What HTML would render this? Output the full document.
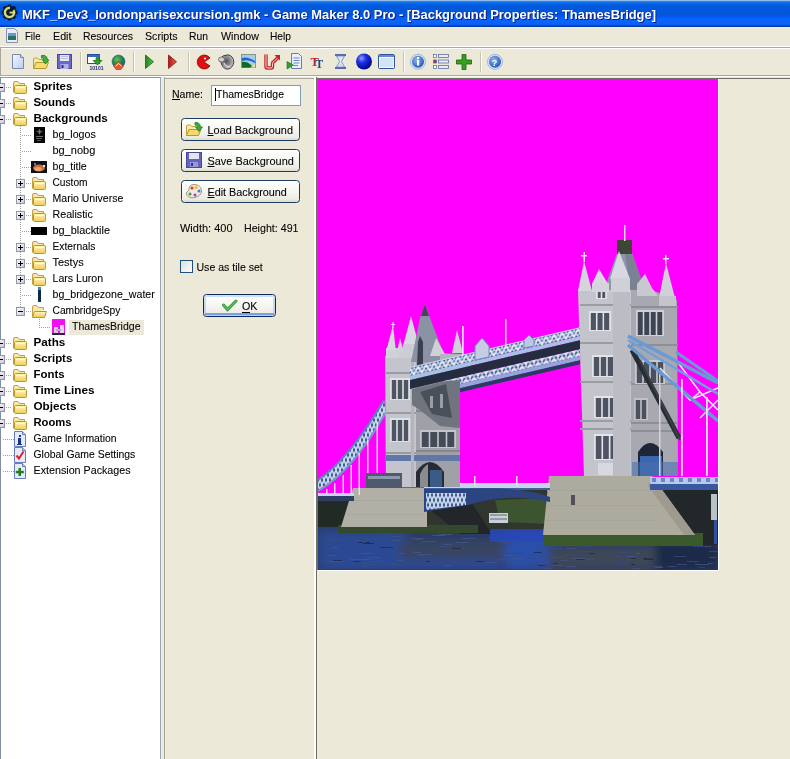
<!DOCTYPE html>
<html><head><meta charset="utf-8"><style>
html,body{margin:0;padding:0;background:#ECE9D8;overflow:hidden}
svg{display:block;will-change:transform}
text{font-family:"Liberation Sans", sans-serif}
</style></head><body>
<svg width="790" height="759" viewBox="0 0 790 759">
<rect x="0" y="0" width="790" height="759" fill="#ECE9D8" />
<defs>
<linearGradient id="tg" x1="0" y1="0" x2="0" y2="27" gradientUnits="userSpaceOnUse">
<stop offset="0" stop-color="#D8F4FF"/>
<stop offset="0.04" stop-color="#3C7CD8"/>
<stop offset="0.08" stop-color="#1A78EA"/>
<stop offset="0.14" stop-color="#0062E8"/>
<stop offset="0.25" stop-color="#0058DC"/>
<stop offset="0.5" stop-color="#0056D6"/>
<stop offset="0.6" stop-color="#0058F0"/>
<stop offset="0.72" stop-color="#0A64FF"/>
<stop offset="0.9" stop-color="#0A62FA"/>
<stop offset="0.94" stop-color="#0050D0"/>
<stop offset="1" stop-color="#00309A"/>
</linearGradient>
</defs>
<rect x="0" y="0" width="790" height="27" fill="url(#tg)" />
<rect x="0" y="27" width="790" height="1" fill="#E4F0FC" />
<g transform="translate(9.5,12.5)"><circle r="6.8" fill="#0E1A30"/><rect x="-1.8" y="-8" width="3.6" height="3.4" fill="#0E1A30" transform="rotate(0)"/><rect x="-1.8" y="-8" width="3.6" height="3.4" fill="#0E1A30" transform="rotate(45)"/><rect x="-1.8" y="-8" width="3.6" height="3.4" fill="#0E1A30" transform="rotate(90)"/><rect x="-1.8" y="-8" width="3.6" height="3.4" fill="#0E1A30" transform="rotate(135)"/><rect x="-1.8" y="-8" width="3.6" height="3.4" fill="#0E1A30" transform="rotate(180)"/><rect x="-1.8" y="-8" width="3.6" height="3.4" fill="#0E1A30" transform="rotate(225)"/><rect x="-1.8" y="-8" width="3.6" height="3.4" fill="#0E1A30" transform="rotate(270)"/><rect x="-1.8" y="-8" width="3.6" height="3.4" fill="#0E1A30" transform="rotate(315)"/><circle r="4.6" fill="none" stroke="#D4DC78" stroke-width="2.4" stroke-dasharray="24 5" transform="rotate(-30)"/><rect x="0" y="-0.8" width="4.5" height="1.8" fill="#D4DC78"/></g>
<text x="23" y="20" font-size="13" font-weight="700" fill="#0A1E7A" textLength="634" lengthAdjust="spacingAndGlyphs" >MKF_Dev3_londonparisexcursion.gmk - Game Maker 8.0 Pro - [Background Properties: ThamesBridge]</text>
<text x="22" y="19" font-size="13" font-weight="700" fill="#FFFFFF" textLength="634" lengthAdjust="spacingAndGlyphs" >MKF_Dev3_londonparisexcursion.gmk - Game Maker 8.0 Pro - [Background Properties: ThamesBridge]</text>
<g transform="translate(5,28)"><path d="M1.5 0.5 H9.5 L12.5 3.5 V14.5 H1.5 Z" fill="#E8ECF8" stroke="#8890B0"/><rect x="3" y="5" width="8" height="7" fill="#2E7060"/><rect x="3" y="5" width="8" height="3" fill="#5AA0C8"/></g>
<text x="25" y="40" font-size="11" font-weight="400" fill="#000" stroke="#000" stroke-width="0.08" textLength="15.5" lengthAdjust="spacingAndGlyphs" >File</text>
<text x="53" y="40" font-size="11" font-weight="400" fill="#000" stroke="#000" stroke-width="0.08" textLength="18.5" lengthAdjust="spacingAndGlyphs" >Edit</text>
<text x="83" y="40" font-size="11" font-weight="400" fill="#000" stroke="#000" stroke-width="0.08" textLength="50" lengthAdjust="spacingAndGlyphs" >Resources</text>
<text x="145" y="40" font-size="11" font-weight="400" fill="#000" stroke="#000" stroke-width="0.08" textLength="32.5" lengthAdjust="spacingAndGlyphs" >Scripts</text>
<text x="189" y="40" font-size="11" font-weight="400" fill="#000" stroke="#000" stroke-width="0.08" textLength="19" lengthAdjust="spacingAndGlyphs" >Run</text>
<text x="221" y="40" font-size="11" font-weight="400" fill="#000" stroke="#000" stroke-width="0.08" textLength="38" lengthAdjust="spacingAndGlyphs" >Window</text>
<text x="270" y="40" font-size="11" font-weight="400" fill="#000" stroke="#000" stroke-width="0.08" textLength="21" lengthAdjust="spacingAndGlyphs" >Help</text>
<rect x="0" y="46" width="790" height="1" fill="#FFFFFF" />
<rect x="0" y="47" width="790" height="1" fill="#ACA899" />
<rect x="0" y="48" width="790" height="1" fill="#FFFFFF" />
<rect x="0" y="75" width="790" height="1" fill="#ACA899" />
<rect x="0" y="76" width="790" height="1" fill="#FFFFFF" />
<rect x="0" y="48" width="1" height="28" fill="#ACA899" />
<rect x="80" y="52" width="1" height="20" fill="#C5C2B2" />
<rect x="81" y="52" width="1" height="20" fill="#FFFFFF" />
<rect x="133" y="52" width="1" height="20" fill="#C5C2B2" />
<rect x="134" y="52" width="1" height="20" fill="#FFFFFF" />
<rect x="188" y="52" width="1" height="20" fill="#C5C2B2" />
<rect x="189" y="52" width="1" height="20" fill="#FFFFFF" />
<rect x="403" y="52" width="1" height="20" fill="#C5C2B2" />
<rect x="404" y="52" width="1" height="20" fill="#FFFFFF" />
<rect x="480" y="52" width="1" height="20" fill="#C5C2B2" />
<rect x="481" y="52" width="1" height="20" fill="#FFFFFF" />
<defs><linearGradient id="docg" x1="0" y1="0" x2="1" y2="1"><stop offset="0" stop-color="#F4F8FF"/><stop offset="1" stop-color="#B8CCF4"/></linearGradient><radialGradient id="ball" cx="0.35" cy="0.3" r="0.7"><stop offset="0" stop-color="#8AA0FF"/><stop offset="0.4" stop-color="#2030E0"/><stop offset="1" stop-color="#000890"/></radialGradient><radialGradient id="globe" cx="0.4" cy="0.35" r="0.7"><stop offset="0" stop-color="#60C060"/><stop offset="0.6" stop-color="#208040"/><stop offset="1" stop-color="#1850A0"/></radialGradient><radialGradient id="infog" cx="0.4" cy="0.35" r="0.7"><stop offset="0" stop-color="#90B8F0"/><stop offset="1" stop-color="#1E50B0"/></radialGradient><linearGradient id="playg" x1="0" y1="0" x2="1" y2="0"><stop offset="0" stop-color="#1E8A1E"/><stop offset="1" stop-color="#50C050"/></linearGradient><linearGradient id="redg" x1="0" y1="0" x2="1" y2="0"><stop offset="0" stop-color="#B01818"/><stop offset="1" stop-color="#E86060"/></linearGradient></defs>
<path d="M12.5 54.5 H20.5 L23.5 57.5 V68.5 H12.5 Z" fill="url(#docg)" stroke="#7A88A8"/><path d="M20.5 54.5 V57.5 H23.5" fill="#D0DCF0" stroke="#7A88A8"/>
<g transform="translate(33,53)"><path d="M0.5 15 V6 Q0.5 5 1.5 5 H4.5 L6 6.5 H10" fill="#F8E8A0" stroke="#C0A040"/><path d="M0.5 15.5 L3 9.5 H15.5 L13 15.5 Z" fill="#F4DC70" stroke="#B8962E"/><path d="M8.5 2.5 Q14 1.5 14.5 7 L16 7 L12.5 11 L9.5 7 L11 7 Q11 4.5 8.5 5 Z" fill="#40B040" stroke="#207820" stroke-width="0.8"/></g>
<g transform="translate(57,54)"><rect x="0.5" y="0.5" width="14" height="14" fill="#6A68C8" stroke="#4A48A8"/><rect x="3" y="1" width="9" height="6" fill="#E8E8F4"/><rect x="4" y="2" width="7" height="1" fill="#C0C0D8"/><rect x="4" y="4" width="7" height="1" fill="#C0C0D8"/><rect x="3.5" y="10" width="8" height="5" fill="#B0B0E0"/><rect x="4.5" y="11" width="2" height="3" fill="#2828A0"/></g>
<g transform="translate(87,54)"><rect x="0.5" y="0.5" width="12" height="9" fill="#FFFFFF" stroke="#2850A0"/><rect x="1" y="1" width="12" height="2" fill="#3868C0"/><path d="M9 3.5 H12 V6.5 H15 L10.5 11 L6 6.5 H9 Z" fill="#30A030" stroke="#187018" stroke-width="0.7"/><text x="2.5" y="15.5" font-size="5" font-weight="700" fill="#202880" textLength="14" lengthAdjust="spacingAndGlyphs">10101</text></g>
<circle cx="118.5" cy="61.5" r="6.5" fill="url(#globe)" stroke="#205080" stroke-width="0.5"/><path d="M113.5 66 L118.5 61.5 L123.5 66 L121 69.5 H116 Z" fill="#E05830" stroke="#A03818" stroke-width="0.6"/><path d="M115.5 66 L118.5 63.5 L121.5 66" fill="none" stroke="#F8F0F0" stroke-width="1"/>
<path d="M145.5 55 L153.5 61.8 L145.5 68.5 Z" fill="url(#playg)" stroke="#186018" stroke-width="0.8"/>
<path d="M168.5 55 L176.5 61.8 L168.5 68.5 Z" fill="url(#redg)" stroke="#901010" stroke-width="0.8"/>
<path d="M210 58 A7 7 0 1 0 210 66 L204 62 Z" fill="#E01010" stroke="#900000" stroke-width="0.8" transform="translate(0,0)"/><circle cx="205" cy="58.5" r="1" fill="#FFF"/>
<defs><radialGradient id="spk" cx="0.45" cy="0.45" r="0.6"><stop offset="0" stop-color="#505058"/><stop offset="0.5" stop-color="#8A8A90"/><stop offset="1" stop-color="#D8D8DC"/></radialGradient></defs>
<g transform="translate(218,54)"><path d="M2 5 Q4 1 10 0.8 Q15.5 2 15.8 8 Q15 14 10 15.2 Q5 15 3.5 10 Z" fill="url(#spk)" stroke="#303030" stroke-width="0.9"/><ellipse cx="3.5" cy="5.5" rx="3" ry="2.5" fill="#D0D0D4" stroke="#505050" stroke-width="0.7"/><path d="M6 9 Q8 13 12 12.5" stroke="#D8D8DC" stroke-width="1.2" fill="none"/></g>
<g transform="translate(241,54)"><rect x="0.5" y="0.5" width="14" height="13" fill="#9CD0F0" stroke="#8A9488"/><path d="M1 4 Q6 2 14 7 V9 Q8 5 1 7 Z" fill="#2A64C0"/><path d="M1 13.5 V8 Q6 7 10 11 L12 13.5 Z" fill="#106A20"/><path d="M9 13.5 L14 10 V13.5 Z" fill="#E0E890"/></g>
<g transform="translate(264,54)"><path d="M2 0.5 V12.5 Q2 14 3.5 14 H7 Q8.5 14 8.5 12.5 V9.5 Q8.5 8 10 7.5 L14.5 3" fill="none" stroke="#C82020" stroke-width="3.4"/><path d="M2 0.5 V12.5 Q2 14 3.5 14 H7 Q8.5 14 8.5 12.5 V9.5 Q8.5 8 10 7.5 L14.5 3" fill="none" stroke="#F8D8D8" stroke-width="1"/><path d="M10.5 1 H16 V6.5 Z" fill="#C82020"/></g>
<g transform="translate(287,53)"><path d="M4.5 0.5 H11.5 L14.5 3.5 V15.5 H4.5 Z" fill="#E8F0FC" stroke="#6A7CB0"/><path d="M6.5 5 H12.5 M6.5 7.5 H12.5 M6.5 10 H12.5 M6.5 12.5 H11" stroke="#7088C0" stroke-width="1"/><path d="M0 8.5 L6.5 12 L0 16 Z" fill="#30A030" stroke="#187018" stroke-width="0.6"/></g>
<text x="310.5" y="66" style="font-family:'Liberation Serif'" font-size="12.5" font-weight="700" fill="#C02030">T</text><text x="315.5" y="67.5" style="font-family:'Liberation Serif'" font-size="11.5" font-weight="700" fill="#1E4888">T</text>
<g transform="translate(335,54)"><rect x="0" y="0" width="11" height="2" fill="#5868A8"/><rect x="0" y="13" width="11" height="2" fill="#5868A8"/><path d="M1.5 2 L9.5 2 L6.5 7.5 L9.5 13 L1.5 13 L4.5 7.5 Z" fill="#E0E8F8" stroke="#7080B8" stroke-width="0.8"/><path d="M3.5 12.5 L5.5 9.5 L7.5 12.5 Z" fill="#C8D0F0"/></g>
<circle cx="364" cy="61.5" r="8" fill="url(#ball)"/>
<g transform="translate(378,54)"><rect x="0.5" y="0.5" width="16" height="14" rx="1" fill="#F0F8FF" stroke="#3050A0"/><rect x="1" y="1" width="15" height="2" fill="#6888D0"/><rect x="2" y="4" width="13" height="9" fill="#D4E4F8"/></g>
<circle cx="418" cy="61.8" r="7.5" fill="#D8E4F8" stroke="#90A8D0" stroke-width="0.8"/><circle cx="418" cy="61.8" r="6" fill="url(#infog)"/><rect x="417" y="57" width="2.2" height="2" fill="#FFF"/><rect x="417" y="60" width="2.2" height="5.5" fill="#FFF"/>
<g transform="translate(433,54)"><rect x="0.5" y="0.5" width="3" height="3" fill="#FFF" stroke="#6070A0" stroke-width="0.8"/><rect x="0.5" y="6" width="3" height="3" fill="#D02020" stroke="#6070A0" stroke-width="0.8"/><rect x="0.5" y="11.5" width="3" height="3" fill="#FFF" stroke="#6070A0" stroke-width="0.8"/><rect x="5.5" y="0.5" width="10" height="3" fill="#E8ECF8" stroke="#6070A0" stroke-width="0.8"/><rect x="5.5" y="6" width="10" height="3" fill="#E8ECF8" stroke="#6070A0" stroke-width="0.8"/><rect x="5.5" y="11.5" width="10" height="3" fill="#E8ECF8" stroke="#6070A0" stroke-width="0.8"/></g>
<path d="M462 54.5 H466 V60 H471.5 V64 H466 V69.5 H462 V64 H456.5 V60 H462 Z" fill="#38A020" stroke="#1E6010" stroke-width="0.8"/>
<circle cx="495" cy="61.8" r="7.5" fill="#D8E4F8" stroke="#90A8D0" stroke-width="0.8"/><circle cx="495" cy="61.8" r="6" fill="url(#infog)"/><text x="491.8" y="66" font-size="9" font-weight="700" fill="#FFF">?</text>
<rect x="0" y="77" width="161" height="682" fill="#FFFFFF" />
<rect x="0" y="77" width="161" height="1" fill="#8C98A4" />
<rect x="0" y="77" width="1" height="682" fill="#8090A4" />
<rect x="160" y="77" width="1" height="682" fill="#99A4AC" />
<rect x="161" y="77" width="3" height="682" fill="#E8ECE6" />
<rect x="164" y="77" width="1" height="682" fill="#A0A08C" />
<rect x="165" y="77" width="1" height="682" fill="#F4F0E0" />
<defs><linearGradient id="fg" x1="0" y1="0" x2="0" y2="1"><stop offset="0" stop-color="#FFF6C0"/><stop offset="1" stop-color="#F0CC50"/></linearGradient><linearGradient id="bx" x1="0" y1="0" x2="1" y2="1"><stop offset="0" stop-color="#FFFFFF"/><stop offset="1" stop-color="#C8C8D0"/></linearGradient></defs>
<rect x="20" y="126" width="1" height="1" fill="#A0A0A0" />
<rect x="20" y="128" width="1" height="1" fill="#A0A0A0" />
<rect x="20" y="130" width="1" height="1" fill="#A0A0A0" />
<rect x="20" y="132" width="1" height="1" fill="#A0A0A0" />
<rect x="20" y="134" width="1" height="1" fill="#A0A0A0" />
<rect x="20" y="136" width="1" height="1" fill="#A0A0A0" />
<rect x="20" y="138" width="1" height="1" fill="#A0A0A0" />
<rect x="20" y="140" width="1" height="1" fill="#A0A0A0" />
<rect x="20" y="142" width="1" height="1" fill="#A0A0A0" />
<rect x="20" y="144" width="1" height="1" fill="#A0A0A0" />
<rect x="20" y="146" width="1" height="1" fill="#A0A0A0" />
<rect x="20" y="148" width="1" height="1" fill="#A0A0A0" />
<rect x="20" y="150" width="1" height="1" fill="#A0A0A0" />
<rect x="20" y="152" width="1" height="1" fill="#A0A0A0" />
<rect x="20" y="154" width="1" height="1" fill="#A0A0A0" />
<rect x="20" y="156" width="1" height="1" fill="#A0A0A0" />
<rect x="20" y="158" width="1" height="1" fill="#A0A0A0" />
<rect x="20" y="160" width="1" height="1" fill="#A0A0A0" />
<rect x="20" y="162" width="1" height="1" fill="#A0A0A0" />
<rect x="20" y="164" width="1" height="1" fill="#A0A0A0" />
<rect x="20" y="166" width="1" height="1" fill="#A0A0A0" />
<rect x="20" y="168" width="1" height="1" fill="#A0A0A0" />
<rect x="20" y="170" width="1" height="1" fill="#A0A0A0" />
<rect x="20" y="172" width="1" height="1" fill="#A0A0A0" />
<rect x="20" y="174" width="1" height="1" fill="#A0A0A0" />
<rect x="20" y="176" width="1" height="1" fill="#A0A0A0" />
<rect x="20" y="178" width="1" height="1" fill="#A0A0A0" />
<rect x="20" y="180" width="1" height="1" fill="#A0A0A0" />
<rect x="20" y="182" width="1" height="1" fill="#A0A0A0" />
<rect x="20" y="184" width="1" height="1" fill="#A0A0A0" />
<rect x="20" y="186" width="1" height="1" fill="#A0A0A0" />
<rect x="20" y="188" width="1" height="1" fill="#A0A0A0" />
<rect x="20" y="190" width="1" height="1" fill="#A0A0A0" />
<rect x="20" y="192" width="1" height="1" fill="#A0A0A0" />
<rect x="20" y="194" width="1" height="1" fill="#A0A0A0" />
<rect x="20" y="196" width="1" height="1" fill="#A0A0A0" />
<rect x="20" y="198" width="1" height="1" fill="#A0A0A0" />
<rect x="20" y="200" width="1" height="1" fill="#A0A0A0" />
<rect x="20" y="202" width="1" height="1" fill="#A0A0A0" />
<rect x="20" y="204" width="1" height="1" fill="#A0A0A0" />
<rect x="20" y="206" width="1" height="1" fill="#A0A0A0" />
<rect x="20" y="208" width="1" height="1" fill="#A0A0A0" />
<rect x="20" y="210" width="1" height="1" fill="#A0A0A0" />
<rect x="20" y="212" width="1" height="1" fill="#A0A0A0" />
<rect x="20" y="214" width="1" height="1" fill="#A0A0A0" />
<rect x="20" y="216" width="1" height="1" fill="#A0A0A0" />
<rect x="20" y="218" width="1" height="1" fill="#A0A0A0" />
<rect x="20" y="220" width="1" height="1" fill="#A0A0A0" />
<rect x="20" y="222" width="1" height="1" fill="#A0A0A0" />
<rect x="20" y="224" width="1" height="1" fill="#A0A0A0" />
<rect x="20" y="226" width="1" height="1" fill="#A0A0A0" />
<rect x="20" y="228" width="1" height="1" fill="#A0A0A0" />
<rect x="20" y="230" width="1" height="1" fill="#A0A0A0" />
<rect x="20" y="232" width="1" height="1" fill="#A0A0A0" />
<rect x="20" y="234" width="1" height="1" fill="#A0A0A0" />
<rect x="20" y="236" width="1" height="1" fill="#A0A0A0" />
<rect x="20" y="238" width="1" height="1" fill="#A0A0A0" />
<rect x="20" y="240" width="1" height="1" fill="#A0A0A0" />
<rect x="20" y="242" width="1" height="1" fill="#A0A0A0" />
<rect x="20" y="244" width="1" height="1" fill="#A0A0A0" />
<rect x="20" y="246" width="1" height="1" fill="#A0A0A0" />
<rect x="20" y="248" width="1" height="1" fill="#A0A0A0" />
<rect x="20" y="250" width="1" height="1" fill="#A0A0A0" />
<rect x="20" y="252" width="1" height="1" fill="#A0A0A0" />
<rect x="20" y="254" width="1" height="1" fill="#A0A0A0" />
<rect x="20" y="256" width="1" height="1" fill="#A0A0A0" />
<rect x="20" y="258" width="1" height="1" fill="#A0A0A0" />
<rect x="20" y="260" width="1" height="1" fill="#A0A0A0" />
<rect x="20" y="262" width="1" height="1" fill="#A0A0A0" />
<rect x="20" y="264" width="1" height="1" fill="#A0A0A0" />
<rect x="20" y="266" width="1" height="1" fill="#A0A0A0" />
<rect x="20" y="268" width="1" height="1" fill="#A0A0A0" />
<rect x="20" y="270" width="1" height="1" fill="#A0A0A0" />
<rect x="20" y="272" width="1" height="1" fill="#A0A0A0" />
<rect x="20" y="274" width="1" height="1" fill="#A0A0A0" />
<rect x="20" y="276" width="1" height="1" fill="#A0A0A0" />
<rect x="20" y="278" width="1" height="1" fill="#A0A0A0" />
<rect x="20" y="280" width="1" height="1" fill="#A0A0A0" />
<rect x="20" y="282" width="1" height="1" fill="#A0A0A0" />
<rect x="20" y="284" width="1" height="1" fill="#A0A0A0" />
<rect x="20" y="286" width="1" height="1" fill="#A0A0A0" />
<rect x="20" y="288" width="1" height="1" fill="#A0A0A0" />
<rect x="20" y="290" width="1" height="1" fill="#A0A0A0" />
<rect x="20" y="292" width="1" height="1" fill="#A0A0A0" />
<rect x="20" y="294" width="1" height="1" fill="#A0A0A0" />
<rect x="20" y="296" width="1" height="1" fill="#A0A0A0" />
<rect x="20" y="298" width="1" height="1" fill="#A0A0A0" />
<rect x="20" y="300" width="1" height="1" fill="#A0A0A0" />
<rect x="20" y="302" width="1" height="1" fill="#A0A0A0" />
<rect x="20" y="304" width="1" height="1" fill="#A0A0A0" />
<rect x="20" y="306" width="1" height="1" fill="#A0A0A0" />
<rect x="20" y="308" width="1" height="1" fill="#A0A0A0" />
<rect x="20" y="310" width="1" height="1" fill="#A0A0A0" />
<rect x="39" y="319" width="1" height="1" fill="#A0A0A0" />
<rect x="39" y="321" width="1" height="1" fill="#A0A0A0" />
<rect x="39" y="323" width="1" height="1" fill="#A0A0A0" />
<rect x="39" y="325" width="1" height="1" fill="#A0A0A0" />
<rect x="39" y="327" width="1" height="1" fill="#A0A0A0" />
<rect x="-3.5" y="83.5" width="8" height="8" fill="url(#bx)" stroke="#8C98A8"/>
<rect x="-2" y="87" width="5" height="1" fill="#000" />
<rect x="6" y="87" width="1" height="1" fill="#A0A0A0" />
<rect x="8" y="87" width="1" height="1" fill="#A0A0A0" />
<rect x="10" y="87" width="1" height="1" fill="#A0A0A0" />
<g transform="translate(12,80)"><path d="M1.5 12.5 V3 Q1.5 1.5 3 1.5 H6 L7.5 3.5 H12.5 V6" fill="#F8E8A8" stroke="#C0A048"/><rect x="2.5" y="5.5" width="12" height="8" rx="1" fill="url(#fg)" stroke="#B8962E"/><rect x="4" y="7" width="8" height="1" fill="#FFFBE0"/></g>
<text x="33.5" y="90" font-size="11" font-weight="700" fill="#000" textLength="38.8" lengthAdjust="spacingAndGlyphs" >Sprites</text>
<rect x="-3.5" y="99.5" width="8" height="8" fill="url(#bx)" stroke="#8C98A8"/>
<rect x="-2" y="103" width="5" height="1" fill="#000" />
<rect x="6" y="103" width="1" height="1" fill="#A0A0A0" />
<rect x="8" y="103" width="1" height="1" fill="#A0A0A0" />
<rect x="10" y="103" width="1" height="1" fill="#A0A0A0" />
<g transform="translate(12,96)"><path d="M1.5 12.5 V3 Q1.5 1.5 3 1.5 H6 L7.5 3.5 H12.5 V6" fill="#F8E8A8" stroke="#C0A048"/><rect x="2.5" y="5.5" width="12" height="8" rx="1" fill="url(#fg)" stroke="#B8962E"/><rect x="4" y="7" width="8" height="1" fill="#FFFBE0"/></g>
<text x="33.5" y="106" font-size="11" font-weight="700" fill="#000" textLength="41.8" lengthAdjust="spacingAndGlyphs" >Sounds</text>
<rect x="-3.5" y="115.5" width="8" height="8" fill="url(#bx)" stroke="#8C98A8"/>
<rect x="-2" y="119" width="5" height="1" fill="#000" />
<rect x="6" y="119" width="1" height="1" fill="#A0A0A0" />
<rect x="8" y="119" width="1" height="1" fill="#A0A0A0" />
<rect x="10" y="119" width="1" height="1" fill="#A0A0A0" />
<g transform="translate(12,112)"><path d="M1.5 12.5 V3 Q1.5 1.5 3 1.5 H6 L7.5 3.5 H12.5 V6" fill="#F8E8A8" stroke="#C0A048"/><rect x="2.5" y="5.5" width="12" height="8" rx="1" fill="url(#fg)" stroke="#B8962E"/><rect x="4" y="7" width="8" height="1" fill="#FFFBE0"/></g>
<text x="33.5" y="122" font-size="11" font-weight="700" fill="#000" textLength="74.3" lengthAdjust="spacingAndGlyphs" >Backgrounds</text>
<rect x="22" y="135" width="1" height="1" fill="#A0A0A0" />
<rect x="24" y="135" width="1" height="1" fill="#A0A0A0" />
<rect x="26" y="135" width="1" height="1" fill="#A0A0A0" />
<rect x="28" y="135" width="1" height="1" fill="#A0A0A0" />
<rect x="30" y="135" width="1" height="1" fill="#A0A0A0" />
<text x="52.5" y="138" font-size="11" font-weight="400" fill="#000" stroke="#000" stroke-width="0.08" textLength="43.3" lengthAdjust="spacingAndGlyphs" >bg_logos</text>
<rect x="22" y="151" width="1" height="1" fill="#A0A0A0" />
<rect x="24" y="151" width="1" height="1" fill="#A0A0A0" />
<rect x="26" y="151" width="1" height="1" fill="#A0A0A0" />
<rect x="28" y="151" width="1" height="1" fill="#A0A0A0" />
<rect x="30" y="151" width="1" height="1" fill="#A0A0A0" />
<text x="52.5" y="154" font-size="11" font-weight="400" fill="#000" stroke="#000" stroke-width="0.08" textLength="42.8" lengthAdjust="spacingAndGlyphs" >bg_nobg</text>
<rect x="22" y="167" width="1" height="1" fill="#A0A0A0" />
<rect x="24" y="167" width="1" height="1" fill="#A0A0A0" />
<rect x="26" y="167" width="1" height="1" fill="#A0A0A0" />
<rect x="28" y="167" width="1" height="1" fill="#A0A0A0" />
<rect x="30" y="167" width="1" height="1" fill="#A0A0A0" />
<text x="52.5" y="170" font-size="11" font-weight="400" fill="#000" stroke="#000" stroke-width="0.08" textLength="34.3" lengthAdjust="spacingAndGlyphs" >bg_title</text>
<rect x="16.5" y="179.5" width="8" height="8" fill="url(#bx)" stroke="#8C98A8"/>
<rect x="18" y="183" width="5" height="1" fill="#000" />
<rect x="20" y="181" width="1" height="5" fill="#000" />
<rect x="26" y="183" width="1" height="1" fill="#A0A0A0" />
<rect x="28" y="183" width="1" height="1" fill="#A0A0A0" />
<rect x="30" y="183" width="1" height="1" fill="#A0A0A0" />
<g transform="translate(31,176)"><path d="M1.5 12.5 V3 Q1.5 1.5 3 1.5 H6 L7.5 3.5 H12.5 V6" fill="#F8E8A8" stroke="#C0A048"/><rect x="2.5" y="5.5" width="12" height="8" rx="1" fill="url(#fg)" stroke="#B8962E"/><rect x="4" y="7" width="8" height="1" fill="#FFFBE0"/></g>
<text x="52.5" y="186" font-size="11" font-weight="400" fill="#000" stroke="#000" stroke-width="0.08" textLength="35.099999999999994" lengthAdjust="spacingAndGlyphs" >Custom</text>
<rect x="16.5" y="195.5" width="8" height="8" fill="url(#bx)" stroke="#8C98A8"/>
<rect x="18" y="199" width="5" height="1" fill="#000" />
<rect x="20" y="197" width="1" height="5" fill="#000" />
<rect x="26" y="199" width="1" height="1" fill="#A0A0A0" />
<rect x="28" y="199" width="1" height="1" fill="#A0A0A0" />
<rect x="30" y="199" width="1" height="1" fill="#A0A0A0" />
<g transform="translate(31,192)"><path d="M1.5 12.5 V3 Q1.5 1.5 3 1.5 H6 L7.5 3.5 H12.5 V6" fill="#F8E8A8" stroke="#C0A048"/><rect x="2.5" y="5.5" width="12" height="8" rx="1" fill="url(#fg)" stroke="#B8962E"/><rect x="4" y="7" width="8" height="1" fill="#FFFBE0"/></g>
<text x="52.5" y="202" font-size="11" font-weight="400" fill="#000" stroke="#000" stroke-width="0.08" textLength="70.8" lengthAdjust="spacingAndGlyphs" >Mario Universe</text>
<rect x="16.5" y="211.5" width="8" height="8" fill="url(#bx)" stroke="#8C98A8"/>
<rect x="18" y="215" width="5" height="1" fill="#000" />
<rect x="20" y="213" width="1" height="5" fill="#000" />
<rect x="26" y="215" width="1" height="1" fill="#A0A0A0" />
<rect x="28" y="215" width="1" height="1" fill="#A0A0A0" />
<rect x="30" y="215" width="1" height="1" fill="#A0A0A0" />
<g transform="translate(31,208)"><path d="M1.5 12.5 V3 Q1.5 1.5 3 1.5 H6 L7.5 3.5 H12.5 V6" fill="#F8E8A8" stroke="#C0A048"/><rect x="2.5" y="5.5" width="12" height="8" rx="1" fill="url(#fg)" stroke="#B8962E"/><rect x="4" y="7" width="8" height="1" fill="#FFFBE0"/></g>
<text x="52.5" y="218" font-size="11" font-weight="400" fill="#000" stroke="#000" stroke-width="0.08" textLength="40.3" lengthAdjust="spacingAndGlyphs" >Realistic</text>
<rect x="22" y="231" width="1" height="1" fill="#A0A0A0" />
<rect x="24" y="231" width="1" height="1" fill="#A0A0A0" />
<rect x="26" y="231" width="1" height="1" fill="#A0A0A0" />
<rect x="28" y="231" width="1" height="1" fill="#A0A0A0" />
<rect x="30" y="231" width="1" height="1" fill="#A0A0A0" />
<text x="52.5" y="234" font-size="11" font-weight="400" fill="#000" stroke="#000" stroke-width="0.08" textLength="57.5" lengthAdjust="spacingAndGlyphs" >bg_blacktile</text>
<rect x="16.5" y="243.5" width="8" height="8" fill="url(#bx)" stroke="#8C98A8"/>
<rect x="18" y="247" width="5" height="1" fill="#000" />
<rect x="20" y="245" width="1" height="5" fill="#000" />
<rect x="26" y="247" width="1" height="1" fill="#A0A0A0" />
<rect x="28" y="247" width="1" height="1" fill="#A0A0A0" />
<rect x="30" y="247" width="1" height="1" fill="#A0A0A0" />
<g transform="translate(31,240)"><path d="M1.5 12.5 V3 Q1.5 1.5 3 1.5 H6 L7.5 3.5 H12.5 V6" fill="#F8E8A8" stroke="#C0A048"/><rect x="2.5" y="5.5" width="12" height="8" rx="1" fill="url(#fg)" stroke="#B8962E"/><rect x="4" y="7" width="8" height="1" fill="#FFFBE0"/></g>
<text x="52.5" y="250" font-size="11" font-weight="400" fill="#000" stroke="#000" stroke-width="0.08" textLength="42.8" lengthAdjust="spacingAndGlyphs" >Externals</text>
<rect x="16.5" y="259.5" width="8" height="8" fill="url(#bx)" stroke="#8C98A8"/>
<rect x="18" y="263" width="5" height="1" fill="#000" />
<rect x="20" y="261" width="1" height="5" fill="#000" />
<rect x="26" y="263" width="1" height="1" fill="#A0A0A0" />
<rect x="28" y="263" width="1" height="1" fill="#A0A0A0" />
<rect x="30" y="263" width="1" height="1" fill="#A0A0A0" />
<g transform="translate(31,256)"><path d="M1.5 12.5 V3 Q1.5 1.5 3 1.5 H6 L7.5 3.5 H12.5 V6" fill="#F8E8A8" stroke="#C0A048"/><rect x="2.5" y="5.5" width="12" height="8" rx="1" fill="url(#fg)" stroke="#B8962E"/><rect x="4" y="7" width="8" height="1" fill="#FFFBE0"/></g>
<text x="52.5" y="266" font-size="11" font-weight="400" fill="#000" stroke="#000" stroke-width="0.08" textLength="31.2" lengthAdjust="spacingAndGlyphs" >Testys</text>
<rect x="16.5" y="275.5" width="8" height="8" fill="url(#bx)" stroke="#8C98A8"/>
<rect x="18" y="279" width="5" height="1" fill="#000" />
<rect x="20" y="277" width="1" height="5" fill="#000" />
<rect x="26" y="279" width="1" height="1" fill="#A0A0A0" />
<rect x="28" y="279" width="1" height="1" fill="#A0A0A0" />
<rect x="30" y="279" width="1" height="1" fill="#A0A0A0" />
<g transform="translate(31,272)"><path d="M1.5 12.5 V3 Q1.5 1.5 3 1.5 H6 L7.5 3.5 H12.5 V6" fill="#F8E8A8" stroke="#C0A048"/><rect x="2.5" y="5.5" width="12" height="8" rx="1" fill="url(#fg)" stroke="#B8962E"/><rect x="4" y="7" width="8" height="1" fill="#FFFBE0"/></g>
<text x="52.5" y="282" font-size="11" font-weight="400" fill="#000" stroke="#000" stroke-width="0.08" textLength="50.599999999999994" lengthAdjust="spacingAndGlyphs" >Lars Luron</text>
<rect x="22" y="295" width="1" height="1" fill="#A0A0A0" />
<rect x="24" y="295" width="1" height="1" fill="#A0A0A0" />
<rect x="26" y="295" width="1" height="1" fill="#A0A0A0" />
<rect x="28" y="295" width="1" height="1" fill="#A0A0A0" />
<rect x="30" y="295" width="1" height="1" fill="#A0A0A0" />
<text x="52.5" y="298" font-size="11" font-weight="400" fill="#000" stroke="#000" stroke-width="0.08" textLength="102.3" lengthAdjust="spacingAndGlyphs" >bg_bridgezone_water</text>
<rect x="16.5" y="307.5" width="8" height="8" fill="url(#bx)" stroke="#8C98A8"/>
<rect x="18" y="311" width="5" height="1" fill="#000" />
<rect x="26" y="311" width="1" height="1" fill="#A0A0A0" />
<rect x="28" y="311" width="1" height="1" fill="#A0A0A0" />
<rect x="30" y="311" width="1" height="1" fill="#A0A0A0" />
<g transform="translate(31,304)"><path d="M1.5 12.5 V3 Q1.5 1.5 3 1.5 H6 L7.5 3.5 H12.5 V6" fill="#F8E8A8" stroke="#C0A048"/><path d="M1.5 13.5 L3.5 7.5 H15.5 L13.5 13.5 Z" fill="url(#fg)" stroke="#B8962E"/></g>
<text x="52.5" y="314" font-size="11" font-weight="400" fill="#000" stroke="#000" stroke-width="0.08" textLength="67.8" lengthAdjust="spacingAndGlyphs" >CambridgeSpy</text>
<rect x="41" y="327" width="1" height="1" fill="#A0A0A0" />
<rect x="43" y="327" width="1" height="1" fill="#A0A0A0" />
<rect x="45" y="327" width="1" height="1" fill="#A0A0A0" />
<rect x="47" y="327" width="1" height="1" fill="#A0A0A0" />
<rect x="49" y="327" width="1" height="1" fill="#A0A0A0" />
<rect x="69" y="320" width="75" height="15" fill="#ECE9D8" />
<text x="72" y="330" font-size="11" font-weight="400" fill="#000" stroke="#000" stroke-width="0.08" textLength="68.5" lengthAdjust="spacingAndGlyphs" >ThamesBridge</text>
<rect x="-3.5" y="339.5" width="8" height="8" fill="url(#bx)" stroke="#8C98A8"/>
<rect x="-2" y="343" width="5" height="1" fill="#000" />
<rect x="6" y="343" width="1" height="1" fill="#A0A0A0" />
<rect x="8" y="343" width="1" height="1" fill="#A0A0A0" />
<rect x="10" y="343" width="1" height="1" fill="#A0A0A0" />
<g transform="translate(12,336)"><path d="M1.5 12.5 V3 Q1.5 1.5 3 1.5 H6 L7.5 3.5 H12.5 V6" fill="#F8E8A8" stroke="#C0A048"/><rect x="2.5" y="5.5" width="12" height="8" rx="1" fill="url(#fg)" stroke="#B8962E"/><rect x="4" y="7" width="8" height="1" fill="#FFFBE0"/></g>
<text x="33.5" y="346" font-size="11" font-weight="700" fill="#000" textLength="31.8" lengthAdjust="spacingAndGlyphs" >Paths</text>
<rect x="-3.5" y="355.5" width="8" height="8" fill="url(#bx)" stroke="#8C98A8"/>
<rect x="-2" y="359" width="5" height="1" fill="#000" />
<rect x="6" y="359" width="1" height="1" fill="#A0A0A0" />
<rect x="8" y="359" width="1" height="1" fill="#A0A0A0" />
<rect x="10" y="359" width="1" height="1" fill="#A0A0A0" />
<g transform="translate(12,352)"><path d="M1.5 12.5 V3 Q1.5 1.5 3 1.5 H6 L7.5 3.5 H12.5 V6" fill="#F8E8A8" stroke="#C0A048"/><rect x="2.5" y="5.5" width="12" height="8" rx="1" fill="url(#fg)" stroke="#B8962E"/><rect x="4" y="7" width="8" height="1" fill="#FFFBE0"/></g>
<text x="33.5" y="362" font-size="11" font-weight="700" fill="#000" textLength="38.8" lengthAdjust="spacingAndGlyphs" >Scripts</text>
<rect x="-3.5" y="371.5" width="8" height="8" fill="url(#bx)" stroke="#8C98A8"/>
<rect x="-2" y="375" width="5" height="1" fill="#000" />
<rect x="6" y="375" width="1" height="1" fill="#A0A0A0" />
<rect x="8" y="375" width="1" height="1" fill="#A0A0A0" />
<rect x="10" y="375" width="1" height="1" fill="#A0A0A0" />
<g transform="translate(12,368)"><path d="M1.5 12.5 V3 Q1.5 1.5 3 1.5 H6 L7.5 3.5 H12.5 V6" fill="#F8E8A8" stroke="#C0A048"/><rect x="2.5" y="5.5" width="12" height="8" rx="1" fill="url(#fg)" stroke="#B8962E"/><rect x="4" y="7" width="8" height="1" fill="#FFFBE0"/></g>
<text x="33.5" y="378" font-size="11" font-weight="700" fill="#000" textLength="31.1" lengthAdjust="spacingAndGlyphs" >Fonts</text>
<rect x="-3.5" y="387.5" width="8" height="8" fill="url(#bx)" stroke="#8C98A8"/>
<rect x="-2" y="391" width="5" height="1" fill="#000" />
<rect x="6" y="391" width="1" height="1" fill="#A0A0A0" />
<rect x="8" y="391" width="1" height="1" fill="#A0A0A0" />
<rect x="10" y="391" width="1" height="1" fill="#A0A0A0" />
<g transform="translate(12,384)"><path d="M1.5 12.5 V3 Q1.5 1.5 3 1.5 H6 L7.5 3.5 H12.5 V6" fill="#F8E8A8" stroke="#C0A048"/><rect x="2.5" y="5.5" width="12" height="8" rx="1" fill="url(#fg)" stroke="#B8962E"/><rect x="4" y="7" width="8" height="1" fill="#FFFBE0"/></g>
<text x="33.5" y="394" font-size="11" font-weight="700" fill="#000" textLength="61.099999999999994" lengthAdjust="spacingAndGlyphs" >Time Lines</text>
<rect x="-3.5" y="403.5" width="8" height="8" fill="url(#bx)" stroke="#8C98A8"/>
<rect x="-2" y="407" width="5" height="1" fill="#000" />
<rect x="6" y="407" width="1" height="1" fill="#A0A0A0" />
<rect x="8" y="407" width="1" height="1" fill="#A0A0A0" />
<rect x="10" y="407" width="1" height="1" fill="#A0A0A0" />
<g transform="translate(12,400)"><path d="M1.5 12.5 V3 Q1.5 1.5 3 1.5 H6 L7.5 3.5 H12.5 V6" fill="#F8E8A8" stroke="#C0A048"/><rect x="2.5" y="5.5" width="12" height="8" rx="1" fill="url(#fg)" stroke="#B8962E"/><rect x="4" y="7" width="8" height="1" fill="#FFFBE0"/></g>
<text x="33.5" y="410" font-size="11" font-weight="700" fill="#000" textLength="43.0" lengthAdjust="spacingAndGlyphs" >Objects</text>
<rect x="-3.5" y="419.5" width="8" height="8" fill="url(#bx)" stroke="#8C98A8"/>
<rect x="-2" y="423" width="5" height="1" fill="#000" />
<rect x="6" y="423" width="1" height="1" fill="#A0A0A0" />
<rect x="8" y="423" width="1" height="1" fill="#A0A0A0" />
<rect x="10" y="423" width="1" height="1" fill="#A0A0A0" />
<g transform="translate(12,416)"><path d="M1.5 12.5 V3 Q1.5 1.5 3 1.5 H6 L7.5 3.5 H12.5 V6" fill="#F8E8A8" stroke="#C0A048"/><rect x="2.5" y="5.5" width="12" height="8" rx="1" fill="url(#fg)" stroke="#B8962E"/><rect x="4" y="7" width="8" height="1" fill="#FFFBE0"/></g>
<text x="33.5" y="426" font-size="11" font-weight="700" fill="#000" textLength="38.099999999999994" lengthAdjust="spacingAndGlyphs" >Rooms</text>
<rect x="3" y="439" width="1" height="1" fill="#A0A0A0" />
<rect x="5" y="439" width="1" height="1" fill="#A0A0A0" />
<rect x="7" y="439" width="1" height="1" fill="#A0A0A0" />
<rect x="9" y="439" width="1" height="1" fill="#A0A0A0" />
<rect x="11" y="439" width="1" height="1" fill="#A0A0A0" />
<rect x="13" y="439" width="1" height="1" fill="#A0A0A0" />
<text x="33.5" y="442" font-size="11" font-weight="400" fill="#000" stroke="#000" stroke-width="0.08" textLength="83.1" lengthAdjust="spacingAndGlyphs" >Game Information</text>
<rect x="3" y="455" width="1" height="1" fill="#A0A0A0" />
<rect x="5" y="455" width="1" height="1" fill="#A0A0A0" />
<rect x="7" y="455" width="1" height="1" fill="#A0A0A0" />
<rect x="9" y="455" width="1" height="1" fill="#A0A0A0" />
<rect x="11" y="455" width="1" height="1" fill="#A0A0A0" />
<rect x="13" y="455" width="1" height="1" fill="#A0A0A0" />
<text x="33.5" y="458" font-size="11" font-weight="400" fill="#000" stroke="#000" stroke-width="0.08" textLength="101.8" lengthAdjust="spacingAndGlyphs" >Global Game Settings</text>
<rect x="3" y="471" width="1" height="1" fill="#A0A0A0" />
<rect x="5" y="471" width="1" height="1" fill="#A0A0A0" />
<rect x="7" y="471" width="1" height="1" fill="#A0A0A0" />
<rect x="9" y="471" width="1" height="1" fill="#A0A0A0" />
<rect x="11" y="471" width="1" height="1" fill="#A0A0A0" />
<rect x="13" y="471" width="1" height="1" fill="#A0A0A0" />
<text x="33.5" y="474" font-size="11" font-weight="400" fill="#000" stroke="#000" stroke-width="0.08" textLength="97.1" lengthAdjust="spacingAndGlyphs" >Extension Packages</text>
<rect x="34" y="127" width="11" height="16" fill="#080808"/><path d="M39.5 128.5 L40.5 131 L43 131.5 L40.5 132.5 L39.5 135 L38.5 132.5 L36 131.5 L38.5 131 Z" fill="#6a7a6a"/><rect x="36" y="136" width="7" height="1" fill="#707070"/><rect x="36" y="138" width="6" height="1" fill="#606060"/><rect x="37" y="140" width="4" height="1" fill="#505050"/>
<rect x="31" y="161" width="16" height="12" fill="#101018"/><ellipse cx="39" cy="168" rx="6" ry="3.5" fill="#C07040"/><ellipse cx="38" cy="169" rx="3.5" ry="2" fill="#F0A860"/><rect x="34" y="163" width="2" height="2" fill="#A06080"/><rect x="43" y="165" width="2" height="2" fill="#E0E0F0"/>
<rect x="31" y="227" width="16" height="8" fill="#000"/>
<rect x="38" y="287" width="3" height="15" fill="#0A2A50"/><rect x="38" y="287" width="3" height="3" fill="#5080B0"/>
<rect x="52" y="319" width="13" height="16" fill="#F010F0"/><rect x="54" y="327" width="4" height="6" fill="#D8C8E0"/><rect x="60" y="325" width="4" height="8" fill="#E0D8E8"/><rect x="56" y="329" width="5" height="2" fill="#B8A8D0"/><rect x="52" y="333" width="13" height="2" fill="#302040"/>
<g transform="translate(14,431)"><path d="M0.5 0.5 H8.5 L11.5 3.5 V15.5 H0.5 Z" fill="#E4ECFC" stroke="#6A7CB8"/><path d="M8.5 0.5 V3.5 H11.5" fill="#C0CCE8" stroke="#6A7CB8"/><rect x="5" y="4" width="2" height="2" fill="#183890"/><rect x="4" y="7" width="3" height="6" fill="#183890"/><rect x="3" y="13" width="5" height="1" fill="#183890"/></g>
<g transform="translate(14,447)"><path d="M0.5 0.5 H8.5 L11.5 3.5 V15.5 H0.5 Z" fill="#E4ECFC" stroke="#6A7CB8"/><path d="M8.5 0.5 V3.5 H11.5" fill="#C0CCE8" stroke="#6A7CB8"/><path d="M2.5 8.5 L5 11.5 L9.5 4.5" fill="none" stroke="#E02030" stroke-width="2"/></g>
<g transform="translate(14,463)"><path d="M0.5 0.5 H8.5 L11.5 3.5 V15.5 H0.5 Z" fill="#E4ECFC" stroke="#6A7CB8"/><path d="M8.5 0.5 V3.5 H11.5" fill="#C0CCE8" stroke="#6A7CB8"/><rect x="4.5" y="5" width="2.5" height="8" fill="#1E8020"/><rect x="1.8" y="7.8" width="8" height="2.5" fill="#1E8020"/></g>
<rect x="164" y="78" width="150" height="1" fill="#ACA899" />
<rect x="314" y="77" width="2" height="682" fill="#FFFFFF" />
<rect x="316" y="77" width="1" height="682" fill="#716F64" />
<defs><linearGradient id="btn" x1="0" y1="0" x2="0" y2="1"><stop offset="0" stop-color="#FFFFFF"/><stop offset="0.5" stop-color="#F6F6F2"/><stop offset="0.85" stop-color="#ECEBE4"/><stop offset="1" stop-color="#D8D4C8"/></linearGradient><linearGradient id="chk" x1="0" y1="0" x2="1" y2="1"><stop offset="0" stop-color="#DCDCD6"/><stop offset="1" stop-color="#FFFFFF"/></linearGradient></defs>
<text x="172" y="98" font-size="11" font-weight="400" fill="#000" stroke="#000" stroke-width="0.08" textLength="31" lengthAdjust="spacingAndGlyphs" >Name:</text>
<rect x="172" y="99" width="8" height="1" fill="#000" />
<rect x="211.5" y="85.5" width="89" height="20" fill="#FFFFFF" stroke="#7F9DB9"/>
<rect x="215" y="88" width="1" height="13" fill="#000" />
<text x="216" y="98" font-size="11" font-weight="400" fill="#000" stroke="#000" stroke-width="0.08" textLength="68" lengthAdjust="spacingAndGlyphs" >ThamesBridge</text>
<rect x="181.5" y="118.5" width="118" height="22" rx="3" fill="url(#btn)" stroke="#1C3C64"/>
<text x="207.5" y="134" font-size="11" font-weight="400" fill="#000" stroke="#000" stroke-width="0.08" textLength="85.5" lengthAdjust="spacingAndGlyphs" >Load Background</text>
<rect x="207.5" y="135" width="6" height="1" fill="#000" />
<rect x="181.5" y="149.5" width="118" height="22" rx="3" fill="url(#btn)" stroke="#1C3C64"/>
<text x="207.5" y="165" font-size="11" font-weight="400" fill="#000" stroke="#000" stroke-width="0.08" textLength="86.3" lengthAdjust="spacingAndGlyphs" >Save Background</text>
<rect x="207.5" y="166" width="7" height="1" fill="#000" />
<rect x="181.5" y="180.5" width="118" height="22" rx="3" fill="url(#btn)" stroke="#1C3C64"/>
<text x="207.5" y="196" font-size="11" font-weight="400" fill="#000" stroke="#000" stroke-width="0.08" textLength="79.3" lengthAdjust="spacingAndGlyphs" >Edit Background</text>
<rect x="207.5" y="197" width="7" height="1" fill="#000" />
<g transform="translate(186,121)"><path d="M0.5 13.5 V5 Q0.5 4 1.5 4 H4.5 L6 5.5 H10" fill="#F8E8A0" stroke="#C0A040"/><path d="M0.5 14.5 L3 8.5 H15 L12.5 14.5 Z" fill="#F4D868" stroke="#B8962E"/><path d="M9 1.5 Q14 1 14.5 6 L16.5 6 L13 10.5 L9.5 6 L11.5 6 Q11.5 3.5 9 4 Z" fill="#38B038" stroke="#207820" stroke-width="0.8"/></g>
<g transform="translate(186,152)"><rect x="0.5" y="0.5" width="15" height="15" fill="#6464C0" stroke="#4848A0"/><rect x="3" y="1" width="10" height="6" fill="#E4E4F0"/><rect x="4" y="10" width="8" height="5" fill="#9898D8"/><rect x="5" y="11" width="2" height="3" fill="#3030A0"/></g>
<g transform="translate(186,183)"><path d="M8 1.5 C13 1.5 15.5 4.5 15.5 8 C15.5 11 13 13.5 9 14.5 C5 15.5 0.5 14 0.5 10 C0.5 8 3 8.5 3 6.5 C3 4 4 1.5 8 1.5 Z" fill="#F0E8D8" stroke="#A09080"/><circle cx="6" cy="5" r="1.5" fill="#E03030"/><circle cx="10" cy="4.5" r="1.5" fill="#F0C020"/><circle cx="13" cy="8" r="1.5" fill="#3080E0"/><circle cx="4" cy="11" r="1.5" fill="#30A040"/><circle cx="9" cy="12" r="1.5" fill="#A040C0"/></g>
<text x="180" y="232" font-size="11" font-weight="400" fill="#000" stroke="#000" stroke-width="0.08" textLength="52.5" lengthAdjust="spacingAndGlyphs" >Width: 400</text>
<text x="244" y="232" font-size="11" font-weight="400" fill="#000" stroke="#000" stroke-width="0.08" textLength="54.5" lengthAdjust="spacingAndGlyphs" >Height: 491</text>
<rect x="180.5" y="260.5" width="12" height="12" fill="url(#chk)" stroke="#1C5180"/>
<text x="196.5" y="271" font-size="11" font-weight="400" fill="#000" stroke="#000" stroke-width="0.08" textLength="66.3" lengthAdjust="spacingAndGlyphs" >Use as tile set</text>
<rect x="203.5" y="294.5" width="72" height="22" rx="3" fill="url(#btn)" stroke="#0C2A5E"/>
<rect x="205" y="296" width="69" height="19" rx="1.5" fill="none" stroke="#A4C4F4" stroke-width="1.2"/>
<rect x="205" y="313" width="69" height="2" fill="#7C9CEC" />
<rect x="205" y="296" width="69" height="1" fill="#CCE0FC" />
<path d="M223.5 305 L227.5 309.5 L236 301" fill="none" stroke="#2F8F2F" stroke-width="3" stroke-linecap="round"/>
<path d="M223.5 305 L227.5 309.5 L236 301" fill="none" stroke="#5CC05C" stroke-width="1.4" stroke-linecap="round"/>
<text x="242" y="310" font-size="11" font-weight="400" fill="#000" stroke="#000" stroke-width="0.08" textLength="15.5" lengthAdjust="spacingAndGlyphs" >OK</text>
<rect x="242" y="312" width="8" height="1" fill="#000" />
<defs><filter id="wblur" x="-20%" y="-50%" width="140%" height="200%"><feGaussianBlur stdDeviation="5"/></filter><clipPath id="pc"><rect x="318" y="79" width="400" height="491"/></clipPath><linearGradient id="water" x1="0" y1="0" x2="0" y2="1"><stop offset="0" stop-color="#2A3248"/><stop offset="0.5" stop-color="#2E3C62"/><stop offset="1" stop-color="#28408A"/></linearGradient><pattern id="lat" width="8" height="10" patternUnits="userSpaceOnUse"><rect width="8" height="10" fill="#3A5080"/><path d="M0 0 L4 10 L8 0 M0 10 L4 0 L8 10" stroke="#C8D8F0" stroke-width="1.6" fill="none"/></pattern><pattern id="win" width="6" height="14" patternUnits="userSpaceOnUse"><rect width="6" height="14" fill="none"/><rect x="1" y="2" width="2" height="9" fill="#6A6A78"/></pattern></defs>
<g clip-path="url(#pc)">
<rect x="318" y="79" width="400" height="491" fill="#FF00FF" />
<rect x="318" y="526" width="400" height="44" fill="#2A3A66"/><g filter="url(#wblur)"><rect x="318" y="530" width="90" height="40" fill="#2C4A92"/><rect x="400" y="540" width="110" height="22" fill="#384462"/><rect x="505" y="532" width="45" height="38" fill="#2A50A8"/><rect x="548" y="546" width="110" height="24" fill="#3E4658"/><rect x="655" y="540" width="63" height="30" fill="#1E2A48"/><rect x="330" y="560" width="170" height="10" fill="#2C4C98"/></g>
<rect x="413" y="552" width="8" height="1" fill="#46588C" opacity="0.7"/><rect x="568" y="535" width="4" height="1" fill="#46588C" opacity="0.7"/><rect x="422" y="541" width="14" height="1" fill="#46588C" opacity="0.7"/><rect x="534" y="552" width="8" height="1" fill="#1E2638" opacity="0.7"/><rect x="411" y="538" width="13" height="1" fill="#46588C" opacity="0.7"/><rect x="615" y="556" width="5" height="1" fill="#3E5080" opacity="0.7"/><rect x="439" y="534" width="13" height="1" fill="#46588C" opacity="0.7"/><rect x="556" y="565" width="8" height="1" fill="#46588C" opacity="0.7"/><rect x="476" y="561" width="8" height="1" fill="#1E2638" opacity="0.7"/><rect x="670" y="536" width="5" height="1" fill="#1E2638" opacity="0.7"/><rect x="421" y="557" width="12" height="1" fill="#34488A" opacity="0.7"/><rect x="486" y="562" width="10" height="1" fill="#46588C" opacity="0.7"/><rect x="552" y="565" width="11" height="1" fill="#3E5080" opacity="0.7"/><rect x="661" y="568" width="11" height="1" fill="#1E2638" opacity="0.7"/><rect x="597" y="544" width="9" height="1" fill="#3E5080" opacity="0.7"/><rect x="604" y="540" width="12" height="1" fill="#34488A" opacity="0.7"/><rect x="432" y="535" width="13" height="1" fill="#46588C" opacity="0.7"/><rect x="353" y="561" width="8" height="1" fill="#1E2638" opacity="0.7"/><rect x="326" y="548" width="8" height="1" fill="#3E5080" opacity="0.7"/><rect x="336" y="555" width="4" height="1" fill="#34488A" opacity="0.7"/><rect x="538" y="565" width="7" height="1" fill="#1E2638" opacity="0.7"/><rect x="717" y="544" width="5" height="1" fill="#3E5080" opacity="0.7"/><rect x="698" y="567" width="7" height="1" fill="#34488A" opacity="0.7"/><rect x="380" y="534" width="13" height="1" fill="#34488A" opacity="0.7"/><rect x="462" y="538" width="13" height="1" fill="#46588C" opacity="0.7"/><rect x="502" y="551" width="10" height="1" fill="#3E5080" opacity="0.7"/><rect x="566" y="566" width="9" height="1" fill="#46588C" opacity="0.7"/><rect x="572" y="558" width="13" height="1" fill="#46588C" opacity="0.7"/><rect x="709" y="551" width="9" height="1" fill="#3E5080" opacity="0.7"/><rect x="633" y="568" width="7" height="1" fill="#46588C" opacity="0.7"/><rect x="564" y="555" width="5" height="1" fill="#34488A" opacity="0.7"/><rect x="505" y="557" width="8" height="1" fill="#34488A" opacity="0.7"/><rect x="613" y="534" width="5" height="1" fill="#3E5080" opacity="0.7"/><rect x="703" y="542" width="9" height="1" fill="#34488A" opacity="0.7"/><rect x="389" y="539" width="12" height="1" fill="#34488A" opacity="0.7"/><rect x="438" y="546" width="12" height="1" fill="#3E5080" opacity="0.7"/><rect x="707" y="557" width="5" height="1" fill="#1E2638" opacity="0.7"/><rect x="579" y="542" width="7" height="1" fill="#46588C" opacity="0.7"/><rect x="578" y="536" width="10" height="1" fill="#34488A" opacity="0.7"/><rect x="588" y="541" width="12" height="1" fill="#1E2638" opacity="0.7"/><rect x="350" y="559" width="6" height="1" fill="#46588C" opacity="0.7"/><rect x="426" y="561" width="4" height="1" fill="#1E2638" opacity="0.7"/><rect x="444" y="562" width="10" height="1" fill="#34488A" opacity="0.7"/><rect x="454" y="562" width="5" height="1" fill="#34488A" opacity="0.7"/><rect x="554" y="548" width="9" height="1" fill="#34488A" opacity="0.7"/><rect x="504" y="555" width="7" height="1" fill="#46588C" opacity="0.7"/><rect x="332" y="547" width="6" height="1" fill="#46588C" opacity="0.7"/><rect x="695" y="564" width="14" height="1" fill="#46588C" opacity="0.7"/><rect x="542" y="568" width="11" height="1" fill="#3E5080" opacity="0.7"/><rect x="616" y="562" width="11" height="1" fill="#34488A" opacity="0.7"/><rect x="536" y="564" width="13" height="1" fill="#34488A" opacity="0.7"/><rect x="366" y="542" width="4" height="1" fill="#1E2638" opacity="0.7"/><rect x="677" y="564" width="10" height="1" fill="#3E5080" opacity="0.7"/><rect x="510" y="537" width="9" height="1" fill="#1E2638" opacity="0.7"/><rect x="583" y="551" width="8" height="1" fill="#3E5080" opacity="0.7"/><rect x="455" y="542" width="13" height="1" fill="#46588C" opacity="0.7"/><rect x="643" y="535" width="6" height="1" fill="#3E5080" opacity="0.7"/><rect x="532" y="562" width="6" height="1" fill="#34488A" opacity="0.7"/><rect x="687" y="561" width="12" height="1" fill="#3E5080" opacity="0.7"/><rect x="513" y="553" width="8" height="1" fill="#34488A" opacity="0.7"/><rect x="417" y="555" width="9" height="1" fill="#3E5080" opacity="0.7"/><rect x="507" y="560" width="4" height="1" fill="#3E5080" opacity="0.7"/><rect x="628" y="535" width="4" height="1" fill="#46588C" opacity="0.7"/><rect x="708" y="563" width="5" height="1" fill="#46588C" opacity="0.7"/><rect x="444" y="544" width="8" height="1" fill="#46588C" opacity="0.7"/><rect x="553" y="546" width="6" height="1" fill="#34488A" opacity="0.7"/><rect x="489" y="537" width="4" height="1" fill="#46588C" opacity="0.7"/><rect x="636" y="553" width="4" height="1" fill="#46588C" opacity="0.7"/><rect x="560" y="560" width="8" height="1" fill="#3E5080" opacity="0.7"/><rect x="567" y="548" width="8" height="1" fill="#46588C" opacity="0.7"/><rect x="622" y="544" width="14" height="1" fill="#46588C" opacity="0.7"/><rect x="502" y="542" width="9" height="1" fill="#3E5080" opacity="0.7"/><rect x="639" y="541" width="5" height="1" fill="#3E5080" opacity="0.7"/><rect x="693" y="546" width="13" height="1" fill="#34488A" opacity="0.7"/><rect x="367" y="557" width="13" height="1" fill="#46588C" opacity="0.7"/><rect x="585" y="559" width="10" height="1" fill="#3E5080" opacity="0.7"/><rect x="643" y="558" width="9" height="1" fill="#1E2638" opacity="0.7"/><rect x="628" y="535" width="5" height="1" fill="#3E5080" opacity="0.7"/><rect x="582" y="546" width="12" height="1" fill="#34488A" opacity="0.7"/><rect x="655" y="537" width="12" height="1" fill="#46588C" opacity="0.7"/><rect x="652" y="566" width="10" height="1" fill="#3E5080" opacity="0.7"/><rect x="333" y="560" width="9" height="1" fill="#1E2638" opacity="0.7"/><rect x="361" y="559" width="13" height="1" fill="#3E5080" opacity="0.7"/><rect x="538" y="563" width="6" height="1" fill="#3E5080" opacity="0.7"/><rect x="415" y="539" width="6" height="1" fill="#46588C" opacity="0.7"/><rect x="419" y="554" width="13" height="1" fill="#46588C" opacity="0.7"/><rect x="705" y="546" width="6" height="1" fill="#46588C" opacity="0.7"/><rect x="655" y="567" width="8" height="1" fill="#46588C" opacity="0.7"/><rect x="380" y="547" width="13" height="1" fill="#1E2638" opacity="0.7"/><rect x="356" y="559" width="13" height="1" fill="#46588C" opacity="0.7"/><rect x="553" y="563" width="5" height="1" fill="#1E2638" opacity="0.7"/><rect x="377" y="551" width="13" height="1" fill="#34488A" opacity="0.7"/><rect x="587" y="563" width="10" height="1" fill="#34488A" opacity="0.7"/><rect x="674" y="544" width="7" height="1" fill="#46588C" opacity="0.7"/><rect x="398" y="553" width="6" height="1" fill="#46588C" opacity="0.7"/><rect x="628" y="538" width="14" height="1" fill="#46588C" opacity="0.7"/><rect x="599" y="540" width="10" height="1" fill="#3E5080" opacity="0.7"/><rect x="511" y="558" width="13" height="1" fill="#46588C" opacity="0.7"/><rect x="631" y="564" width="4" height="1" fill="#1E2638" opacity="0.7"/><rect x="674" y="556" width="12" height="1" fill="#3E5080" opacity="0.7"/><rect x="701" y="563" width="6" height="1" fill="#1E2638" opacity="0.7"/><rect x="628" y="538" width="10" height="1" fill="#3E5080" opacity="0.7"/><rect x="678" y="542" width="13" height="1" fill="#34488A" opacity="0.7"/><rect x="391" y="536" width="12" height="1" fill="#3E5080" opacity="0.7"/><rect x="355" y="562" width="7" height="1" fill="#34488A" opacity="0.7"/><rect x="499" y="559" width="7" height="1" fill="#3E5080" opacity="0.7"/><rect x="452" y="548" width="9" height="1" fill="#1E2638" opacity="0.7"/><rect x="576" y="559" width="9" height="1" fill="#1E2638" opacity="0.7"/><rect x="536" y="537" width="7" height="1" fill="#46588C" opacity="0.7"/><rect x="363" y="564" width="13" height="1" fill="#3E5080" opacity="0.7"/><rect x="529" y="558" width="11" height="1" fill="#34488A" opacity="0.7"/><rect x="621" y="543" width="11" height="1" fill="#34488A" opacity="0.7"/><rect x="361" y="566" width="7" height="1" fill="#3E5080" opacity="0.7"/><rect x="585" y="551" width="5" height="1" fill="#34488A" opacity="0.7"/><rect x="589" y="553" width="6" height="1" fill="#1E2638" opacity="0.7"/><rect x="390" y="564" width="11" height="1" fill="#3E5080" opacity="0.7"/><rect x="361" y="553" width="13" height="1" fill="#46588C" opacity="0.7"/><rect x="540" y="556" width="9" height="1" fill="#34488A" opacity="0.7"/><rect x="631" y="558" width="5" height="1" fill="#1E2638" opacity="0.7"/><rect x="620" y="552" width="11" height="1" fill="#34488A" opacity="0.7"/><rect x="358" y="542" width="5" height="1" fill="#1E2638" opacity="0.7"/><rect x="335" y="551" width="6" height="1" fill="#34488A" opacity="0.7"/><rect x="668" y="566" width="8" height="1" fill="#3E5080" opacity="0.7"/><rect x="459" y="563" width="5" height="1" fill="#34488A" opacity="0.7"/><rect x="554" y="557" width="10" height="1" fill="#3E5080" opacity="0.7"/><rect x="392" y="540" width="8" height="1" fill="#46588C" opacity="0.7"/><rect x="644" y="559" width="10" height="1" fill="#1E2638" opacity="0.7"/><rect x="662" y="561" width="9" height="1" fill="#1E2638" opacity="0.7"/><rect x="545" y="540" width="7" height="1" fill="#34488A" opacity="0.7"/><rect x="330" y="561" width="13" height="1" fill="#46588C" opacity="0.7"/><rect x="444" y="565" width="7" height="1" fill="#46588C" opacity="0.7"/><rect x="709" y="557" width="7" height="1" fill="#46588C" opacity="0.7"/><rect x="330" y="540" width="10" height="1" fill="#3E5080" opacity="0.7"/><rect x="626" y="556" width="9" height="1" fill="#46588C" opacity="0.7"/><rect x="398" y="560" width="6" height="1" fill="#46588C" opacity="0.7"/><rect x="363" y="543" width="11" height="1" fill="#1E2638" opacity="0.7"/><rect x="372" y="561" width="10" height="1" fill="#3E5080" opacity="0.7"/><rect x="328" y="555" width="9" height="1" fill="#46588C" opacity="0.7"/><rect x="534" y="566" width="7" height="1" fill="#34488A" opacity="0.7"/><rect x="596" y="538" width="13" height="1" fill="#3E5080" opacity="0.7"/>
<polygon points="318,500 355,500 341,527 318,527" fill="#222A26"/>
<polygon points="424,489 550,489 550,531 424,531" fill="#30362E"/>
<polygon points="495,500 548,498 548,524 500,522" fill="#3C5430"/>
<polygon points="424,505 470,500 492,534 460,534" fill="#22262A"/>
<rect x="489" y="513" width="19" height="10" fill="#C8D0D8"/><path d="M490 515 h17 M490 519 h17" stroke="#606878" stroke-width="1"/>
<rect x="490" y="529" width="56" height="13" fill="#2848B8" opacity="0.85"/>
<polygon points="652,490 718,490 718,545 698,545" fill="#22272A"/><rect x="711" y="494" width="6" height="26" fill="#B8C0C8"/><rect x="714" y="520" width="3" height="24" fill="#3050A0"/>
<rect x="338" y="525" width="140" height="8" fill="#34482E" />
<rect x="543" y="533" width="160" height="13" fill="#3A5A2E" />
<polygon points="353,488 427,488 427,527 341,527" fill="#B2B0A6"/>
<polygon points="549,476 652,476 695,535 543,535" fill="#ADAA9E"/>
<polygon points="652,476 695,535 684,535 648,486" fill="#9E9A8E"/>
<rect x="346" y="500" width="80" height="1" fill="#A8A8A2" />
<rect x="346" y="514" width="80" height="1" fill="#A8A8A2" />
<rect x="547" y="490" width="110" height="1" fill="#A4A49E" />
<rect x="547" y="505" width="110" height="1" fill="#A4A49E" />
<rect x="547" y="520" width="110" height="1" fill="#A4A49E" />
<rect x="571" y="495" width="4" height="10" fill="#505058"/>
<path d="M318 480 Q350 458 384 400 L386 412 Q352 472 318 491 Z" fill="url(#lat)"/>
<path d="M318 480 Q350 458 384 400" stroke="#6080C0" stroke-width="2" fill="none"/>
<path d="M318 491 Q352 472 386 412" stroke="#7A98D0" stroke-width="2" fill="none"/>
<rect x="326" y="489" width="1.5" height="6" fill="#F0D8F0" />
<rect x="334" y="483" width="1.5" height="12" fill="#F0D8F0" />
<rect x="342.5" y="475" width="1.5" height="20" fill="#F0D8F0" />
<rect x="350.5" y="465" width="1.5" height="30" fill="#F0D8F0" />
<rect x="358.5" y="453" width="1.5" height="42" fill="#F0D8F0" />
<rect x="367" y="440" width="1.5" height="34" fill="#F0D8F0" />
<rect x="376.5" y="422" width="1.5" height="52" fill="#F0D8F0" />
<rect x="318" y="493" width="36" height="3" fill="#C8D4F0"/><rect x="318" y="496" width="36" height="5" fill="#2E3E66"/>
<rect x="424" y="483" width="126" height="6" fill="#C8D4EC"/><rect x="424" y="488" width="126" height="2" fill="#4060A0"/>
<path d="M424 489 L465 489 Q520 486 550 497 L550 502 Q510 492 468 505 L424 512 Z" fill="#2C4480"/>
<path d="M426 493 L466 493 L466 505 L426 510 Z" fill="url(#lat)"/>
<rect x="474" y="476" width="1.5" height="10" fill="#E8E0F0" />
<rect x="516" y="476" width="1.5" height="10" fill="#E8E0F0" />
<rect x="650" y="477" width="68" height="8" fill="#B8C8EC"/><rect x="650" y="484" width="68" height="6" fill="#3A58A0"/>
<rect x="652" y="478" width="4" height="4" fill="#6A84C4" />
<rect x="661" y="478" width="4" height="4" fill="#6A84C4" />
<rect x="670" y="478" width="4" height="4" fill="#6A84C4" />
<rect x="679" y="478" width="4" height="4" fill="#6A84C4" />
<rect x="688" y="478" width="4" height="4" fill="#6A84C4" />
<rect x="697" y="478" width="4" height="4" fill="#6A84C4" />
<rect x="706" y="478" width="4" height="4" fill="#6A84C4" />
<rect x="715" y="478" width="4" height="4" fill="#6A84C4" />
<polygon points="385,356 416,356 416,487 386,487" fill="#C4C4CC"/>
<polygon points="416,352 460,354 460,487 416,487" fill="#A0A0A8"/>
<rect x="386" y="372" width="30" height="2" fill="#9A9AA2" />
<rect x="416" y="370" width="44" height="2" fill="#86868E" />
<rect x="386" y="412" width="30" height="2" fill="#9A9AA2" />
<rect x="416" y="410" width="44" height="2" fill="#86868E" />
<rect x="386" y="452" width="30" height="2" fill="#9A9AA2" />
<rect x="416" y="450" width="44" height="2" fill="#86868E" />
<rect x="390" y="378" width="20" height="22" fill="#E0E0E8"/>
<rect x="391.8" y="380" width="4.4" height="19" fill="#4E5462"/>
<rect x="397.8" y="380" width="4.4" height="19" fill="#4E5462"/>
<rect x="403.8" y="380" width="4.4" height="19" fill="#4E5462"/>
<rect x="390" y="418" width="20" height="24" fill="#E0E0E8"/>
<rect x="391.8" y="420" width="4.4" height="21" fill="#4E5462"/>
<rect x="397.8" y="420" width="4.4" height="21" fill="#4E5462"/>
<rect x="403.8" y="420" width="4.4" height="21" fill="#4E5462"/>
<rect x="420" y="430" width="36" height="18" fill="#C4C4CC"/>
<rect x="421.8" y="432" width="6.9" height="15" fill="#444A56"/>
<rect x="430.3" y="432" width="6.9" height="15" fill="#444A56"/>
<rect x="438.8" y="432" width="6.9" height="15" fill="#444A56"/>
<rect x="447.3" y="432" width="6.9" height="15" fill="#444A56"/>
<rect x="386" y="455" width="74" height="6" fill="#6078A8" />
<path d="M416 487 V472 Q430 452 444 472 V487 Z" fill="#262C36"/><path d="M420 487 V474 Q424 466 428 464 V487 Z" fill="#8A8C90"/>
<rect x="430" y="470" width="12" height="17" fill="#3A5A88"/>
<rect x="411" y="356" width="3" height="131" fill="#B4B4BC" />
<rect x="386" y="348" width="30" height="10" fill="#CDCDD4"/>
<polygon points="386,352 393,325 396,352" fill="#D8D8E0"/>
<rect x="386" y="350" width="11" height="8" fill="#D0D0D8"/>
<polygon points="403,346 411,316 419,346" fill="#D8D8E2"/>
<rect x="403" y="344" width="15" height="14" fill="#CCCCD4"/>
<polygon points="397,352 400,338 404,352" fill="#D0D0D8"/>
<polygon points="411,362 420,318 425,304 430,318 447,362" fill="#8A92A4"/>
<polygon points="421,316 425,304 429,316" fill="#404858"/>
<polygon points="417,366 418,342 420,336 423,342 423,366" fill="#3A4050"/>
<polygon points="430,356 436,338 446,356" fill="#D0D0D8"/>
<polygon points="440,354 470,354 470,370 440,372" fill="#B4B4BC"/><polygon points="452,353 457,330 463,353" fill="#D0D0DA"/>
<rect x="392.5" y="322" width="1" height="6" fill="#E8E0F0" />
<rect x="391" y="324" width="4" height="1" fill="#E8E0F0" />
<rect x="462" y="327" width="1.5" height="28" fill="#E8D8EC" />
<rect x="366" y="473" width="36" height="15" fill="#4E5A6E"/><rect x="368" y="476" width="32" height="3" fill="#8C98AC"/>
<polygon points="578,290 631,290 631,476 584,476" fill="#C4C4CC"/>
<polygon points="631,282 677,300 678,476 631,476" fill="#A8A8B0"/>
<rect x="580" y="304" width="51" height="2" fill="#9C9CA4" />
<rect x="631" y="306" width="47" height="2" fill="#8E8E96" />
<rect x="580" y="342" width="51" height="2" fill="#9C9CA4" />
<rect x="631" y="344" width="47" height="2" fill="#8E8E96" />
<rect x="580" y="381" width="51" height="2" fill="#9C9CA4" />
<rect x="631" y="383" width="47" height="2" fill="#8E8E96" />
<rect x="580" y="420" width="51" height="2" fill="#9C9CA4" />
<rect x="631" y="422" width="47" height="2" fill="#8E8E96" />
<rect x="580" y="428" width="51" height="2" fill="#9C9CA4" />
<rect x="631" y="430" width="47" height="2" fill="#8E8E96" />
<rect x="596" y="287" width="11" height="12" fill="#E4E4EC"/>
<rect x="597.8" y="289" width="2.9" height="9" fill="#4E5462"/>
<rect x="602.3" y="289" width="2.9" height="9" fill="#4E5462"/>
<rect x="589" y="311" width="22" height="20" fill="#E4E4EC"/>
<rect x="590.8" y="313" width="5.1" height="17" fill="#4E5462"/>
<rect x="597.5" y="313" width="5.1" height="17" fill="#4E5462"/>
<rect x="604.1" y="313" width="5.1" height="17" fill="#4E5462"/>
<rect x="592" y="355" width="23" height="22" fill="#E4E4EC"/>
<rect x="593.8" y="357" width="5.4" height="19" fill="#4E5462"/>
<rect x="600.8" y="357" width="5.4" height="19" fill="#4E5462"/>
<rect x="607.8" y="357" width="5.4" height="19" fill="#4E5462"/>
<rect x="594" y="396" width="23" height="22" fill="#E4E4EC"/>
<rect x="595.8" y="398" width="5.4" height="19" fill="#4E5462"/>
<rect x="602.8" y="398" width="5.4" height="19" fill="#4E5462"/>
<rect x="609.8" y="398" width="5.4" height="19" fill="#4E5462"/>
<rect x="594" y="434" width="24" height="26" fill="#E4E4EC"/>
<rect x="595.8" y="436" width="5.7" height="23" fill="#4E5462"/>
<rect x="603.1" y="436" width="5.7" height="23" fill="#4E5462"/>
<rect x="610.5" y="436" width="5.7" height="23" fill="#4E5462"/>
<rect x="598" y="463" width="18" height="12" fill="#D8D8E0"/>
<rect x="636" y="310" width="28" height="26" fill="#D0D0D8"/>
<rect x="637.8" y="312" width="4.9" height="23" fill="#3E4452"/>
<rect x="644.3" y="312" width="4.9" height="23" fill="#3E4452"/>
<rect x="650.8" y="312" width="4.9" height="23" fill="#3E4452"/>
<rect x="657.3" y="312" width="4.9" height="23" fill="#3E4452"/>
<rect x="635" y="360" width="30" height="24" fill="#C8C8D0"/>
<rect x="636.8" y="362" width="5.4" height="21" fill="#4A505C"/>
<rect x="643.8" y="362" width="5.4" height="21" fill="#4A505C"/>
<rect x="650.8" y="362" width="5.4" height="21" fill="#4A505C"/>
<rect x="657.8" y="362" width="5.4" height="21" fill="#4A505C"/>
<rect x="634" y="398" width="14" height="22" fill="#C0C0C8"/>
<rect x="635.8" y="400" width="4.4" height="19" fill="#4A505C"/>
<rect x="641.8" y="400" width="4.4" height="19" fill="#4A505C"/>
<rect x="613" y="282" width="17" height="194" fill="#BCBCC4" />
<path d="M638 476 V452 Q650 434 663 452 V476 Z" fill="#1E2638"/>
<rect x="640" y="456" width="22" height="20" fill="#3A68B0"/><rect x="632" y="462" width="46" height="14" fill="#4A70B0" opacity="0.6"/>
<polygon points="604,290 617,253 632,253 645,290" fill="#8E96A8"/><polygon points="625,253 632,253 645,290 630,290" fill="#7A8294"/>
<rect x="617" y="240" width="15" height="14" fill="#3E4638"/>
<rect x="624" y="225" width="1.5" height="16" fill="#E8D8EC" />
<polygon points="578,291 584,261 592,291" fill="#D4D4DC"/>
<rect x="583.5" y="252" width="1.5" height="10" fill="#E8E0F0" />
<rect x="581" y="255" width="6" height="1.5" fill="#E8E0F0" />
<polygon points="592,284 599,269 608,284" fill="#D8D8E0"/>
<polygon points="610,279 619,251 630,279" fill="#D8D8E2"/>
<rect x="611" y="278" width="19" height="14" fill="#D0D0D8"/>
<polygon points="637,284 645,274 652,288 658,296 637,296" fill="#C8C8D0"/>
<polygon points="659,298 666,263 675,298" fill="#D0D0D8"/>
<rect x="665" y="255" width="1.5" height="9" fill="#E8E0F0" />
<rect x="663" y="258" width="6" height="1.5" fill="#E8E0F0" />
<rect x="659" y="296" width="17" height="10" fill="#C4C4CC"/>
<rect x="592" y="283" width="17" height="9" fill="#D4D4DC"/>
<defs><pattern id="lat2" width="8" height="8" patternUnits="userSpaceOnUse"><rect width="8" height="8" fill="#3A4874"/><path d="M0 0.5 L4 7.5 L8 0.5" stroke="#E4ECFA" stroke-width="2.2" fill="none"/><path d="M0 7.5 L4 0.5 L8 7.5" stroke="#C0D0EE" stroke-width="1.6" fill="none"/></pattern></defs>
<g transform="translate(410,368) skewY(-13.2)"><rect x="0" y="-1" width="170" height="1.5" fill="#C8D8F0"/><rect x="0" y="0" width="170" height="8" fill="url(#lat2)"/><rect x="0" y="8" width="170" height="4" fill="#A8C0E8"/><rect x="0" y="12" width="170" height="9" fill="#262C40"/><rect x="34" y="21" width="136" height="7" fill="url(#lat2)"/><rect x="34" y="28" width="136" height="4" fill="#8EA8D8"/><rect x="34" y="32" width="136" height="4" fill="#2A3A60"/></g>
<polygon points="412,389 446,381 460,380 460,428 440,426 420,410 412,405" fill="#70747E"/><polygon points="420,392 446,384 452,418 432,414" fill="#4A505A"/><rect x="430" y="396" width="3" height="12" fill="#9A9CA8"/><rect x="440" y="394" width="3" height="14" fill="#9A9CA8"/>
<polygon points="475,360 475,346 482,338 489,346 489,357" fill="#C8CCE0" stroke="#6A88C8" stroke-width="1"/>
<polygon points="524,348 524,340 529,335 534,340 534,346" fill="#C0C8E0" stroke="#6A88C8" stroke-width="1"/>
<rect x="462" y="326" width="1.5" height="30" fill="#E8D8EC" />
<rect x="505" y="319" width="1.5" height="28" fill="#E8D8EC" />
<path d="M632 350 L679 438" stroke="#262C34" stroke-width="5"/>
<path d="M640 360 L680 440" stroke="#3A4048" stroke-width="2"/>
<rect x="659" y="374" width="1.5" height="102" fill="#D8D0E0" />
<path d="M660 368 L690 400 L718 388 M676 360 L700 392 L718 410 M690 400 L700 392 M700 418 L718 400" stroke="#E8F0FF" stroke-width="1.5" fill="none"/>
<path d="M628 336 L718 383" stroke="#6A9AD4" stroke-width="3.5"/>
<path d="M628 340 L718 394" stroke="#70A0D8" stroke-width="2.5"/>
<path d="M628 345 L718 421" stroke="#6A9AD4" stroke-width="3.5"/>
<path d="M676 352 L718 381" stroke="#6A9AD4" stroke-width="3"/>
<rect x="681" y="379" width="1.8" height="97" fill="#F4E0F4" />
<rect x="706" y="397" width="1.8" height="79" fill="#F4E0F4" />
</g>
<rect x="317" y="78" width="473" height="1" fill="#716F64" />
<rect x="317" y="78" width="1" height="492" fill="#716F64" />
<rect x="318" y="570" width="400" height="1" fill="#FFFFFF" />
<rect x="718" y="79" width="1" height="492" fill="#FFFFFF" />
</svg>
</body></html>
